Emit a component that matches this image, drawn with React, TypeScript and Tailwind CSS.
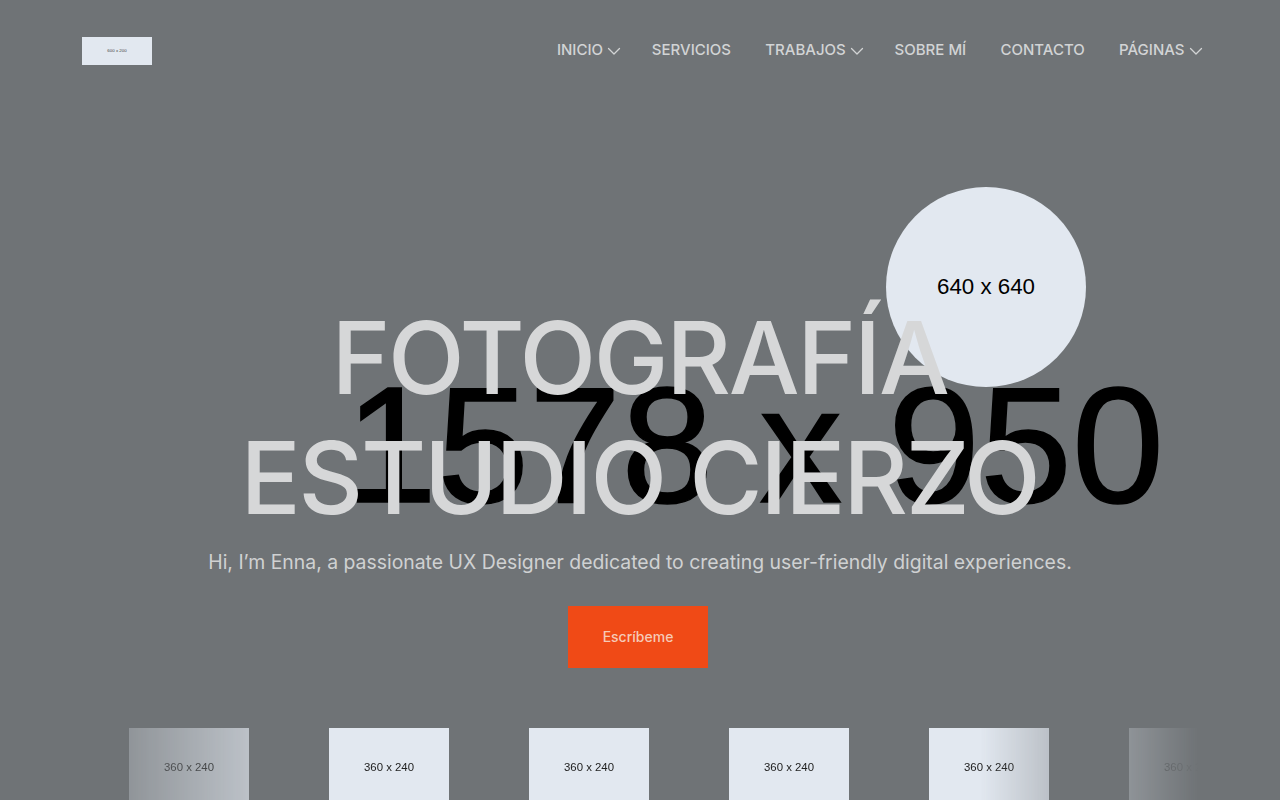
import React from "react";

function Chevron() {
  return (
    <svg width="14" height="14" viewBox="0 0 14 14" fill="none" stroke="currentColor" strokeWidth="1.3" strokeLinecap="round" strokeLinejoin="round" className="mt-[1px] -mr-[3.5px]">
      <path d="M1.5 4.5 L7 10 L12.5 4.5" />
    </svg>
  );
}

const nav = [
  { t: "INICIO", c: true },
  { t: "SERVICIOS" },
  { t: "TRABAJOS", c: true },
  { t: "SOBRE MÍ" },
  { t: "CONTACTO" },
  { t: "PÁGINAS", c: true },
];

export default function App() {
  return (
    <div className="relative h-[800px] w-full overflow-hidden bg-[#6f7376] font-['Inter',sans-serif]">
      <div className="absolute left-[345px] top-[350px] whitespace-nowrap font-['Liberation_Sans',sans-serif] text-[165.5px] leading-[190px] text-black [-webkit-text-stroke:1.5px_black]">
        1578 x 950
      </div>
      <div className="absolute left-[886px] top-[187px] flex h-[200px] w-[200px] items-center justify-center rounded-full bg-[#e2e8f0] font-['Liberation_Sans',sans-serif] text-[22.3px] text-black">
        640 x 640
      </div>

      <div className="relative flex h-full flex-col">
        <header className="flex items-start justify-between pl-[82px] pr-[81px] pt-[37px]">
          <div className="flex h-[28px] w-[70px] items-center justify-center bg-[#e2e8f0] font-['Liberation_Sans',sans-serif] text-[4.4px] text-[#444]">
            600 x 200
          </div>
          <nav className="flex items-center gap-[34.3px] pt-[2px] text-[15px] font-medium leading-[22px] text-[#d2d4d5]">
            {nav.map((n) => (
              <span key={n.t} className="flex items-center gap-[4px]">
                {n.t}
                {n.c && <Chevron />}
              </span>
            ))}
          </nav>
        </header>

        <main className="mt-[233px] flex flex-col items-center text-center">
          <h1 className="mr-[1px] text-[100px] font-medium leading-[120px] tracking-[-0.023em] text-[#d6d7d8]">
            FOTOGRAFÍA
            <br />
            ESTUDIO CIERZO
          </h1>
          <p className="mt-[9px] text-[19.4px] leading-[30px] text-[#cfd1d2]">
            Hi, I’m Enna, a passionate UX Designer dedicated to creating user-friendly digital experiences.
          </p>
          <button className="mt-[29px] mr-[4px] h-[62px] w-[140px] bg-[#f04a16] pb-[2px] text-[14px] font-medium text-[#f6c9b6]">
            Escríbeme
          </button>
        </main>

        <div className="mt-[60px] ml-[82px] w-[1116px] overflow-hidden [mask-image:linear-gradient(to_right,rgba(0,0,0,0.1),rgba(0,0,0,0.29)_4.2%,rgba(0,0,0,0.67)_15%,black_22%,black_80.5%,rgba(0,0,0,0.67)_86.6%,rgba(0,0,0,0.28)_93.8%,transparent_100%)]">
          <div className="flex gap-[80px] pl-[47px]">
            {[0, 1, 2, 3, 4, 5].map((i) => (
              <div
                key={i}
                className="flex h-[80px] w-[120px] shrink-0 items-center justify-center bg-[#e2e8f0] font-['Liberation_Sans',sans-serif] text-[11.4px] text-[#222]"
              >
                360 x 240
              </div>
            ))}
          </div>
        </div>
      </div>
    </div>
  );
}
